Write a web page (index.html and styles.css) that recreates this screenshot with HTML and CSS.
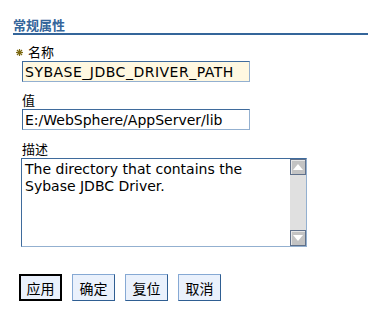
FILE: index.html
```html
<!DOCTYPE html>
<html lang="zh">
<head>
<meta charset="utf-8">
<title>常规属性</title>
<link rel="stylesheet" href="styles.css">
</head>
<body>
<div class="panel">
  <h2 class="section-title">常规属性</h2>
  <div class="fields">
    <div class="field field-first">
      <label class="label"><span class="req"><svg width="7" height="7" viewBox="0 0 7 7"><g stroke="#7d6a14" stroke-width="1.2"><line x1="3.5" y1="0" x2="3.5" y2="7"/><line x1="0" y1="3.5" x2="7" y2="3.5"/><line x1="1" y1="1" x2="6" y2="6"/><line x1="6" y1="1" x2="1" y2="6"/></g></svg></span>名称</label>
      <input class="input input-req" type="text" value="SYBASE_JDBC_DRIVER_PATH">
    </div>
    <div class="field">
      <label class="label">值</label>
      <input class="input" type="text" value="E:/WebSphere/AppServer/lib">
    </div>
    <div class="field field-desc">
      <label class="label">描述</label>
      <div class="textbox">
        <textarea class="textarea">The directory that contains the Sybase JDBC Driver.</textarea>
        <div class="scrollbar">
          <div class="sb-btn"><svg width="10" height="6" viewBox="0 0 10 6"><polygon points="5,0 10,6 0,6" fill="#fff"/></svg></div>
          <div class="sb-track"></div>
          <div class="sb-btn"><svg width="10" height="6" viewBox="0 0 10 6"><polygon points="0,0 10,0 5,6" fill="#fff"/></svg></div>
        </div>
      </div>
    </div>
  </div>
  <div class="buttons">
    <button class="btn btn-default">应用</button>
    <button class="btn">确定</button>
    <button class="btn">复位</button>
    <button class="btn">取消</button>
  </div>
</div>
</body>
</html>
```

FILE: styles.css
```css
html, body {
  margin: 0;
  padding: 0;
  background: #ffffff;
}
body {
  font-family: "Noto Sans CJK SC", "DejaVu Sans", sans-serif;
  color: #000;
}
.panel {
  padding-top: 17px;
  padding-left: 13px;
}
.section-title {
  margin: 0;
  font-size: 13px;
  line-height: 16px;
  font-weight: bold;
  color: #34659a;
  border-bottom: 2px solid #34659a;
}
.fields {
  padding-left: 8px;
}
.field {
  display: flex;
  flex-direction: column;
  align-items: flex-start;
  margin-top: 10px;
}
.field-first {
  margin-top: 9px;
}
.field-desc {
  margin-top: 11px;
}
.label {
  display: flex;
  align-items: center;
  font-size: 13px;
  line-height: 16px;
  height: 16px;
  margin-bottom: 1px;
  padding-left: 1px;
}
.req {
  display: inline-flex;
  width: 7px;
  height: 7px;
  margin-left: -6px;
  margin-right: 5px;
}
.input {
  box-sizing: border-box;
  width: 228px;
  height: 21px;
  margin: 0 0 0 1px;
  padding: 0 2px;
  font-family: "DejaVu Sans", sans-serif;
  font-size: 14px;
  color: #000;
  background: #fff;
  border: 1px solid;
  border-color: #3f6b9c #93b0d0 #93b0d0 #3f6b9c;
  outline: none;
}
.input-req {
  background: #fff8e1;
  letter-spacing: 0.5px;
}
.textbox {
  box-sizing: border-box;
  display: flex;
  width: 286px;
  height: 89px;
  border: 1px solid;
  border-color: #3f6b9c #93b0d0 #93b0d0 #3f6b9c;
  background: #fff;
}
.textarea {
  flex: 1;
  min-width: 0;
  margin: 0;
  border: 0;
  padding: 2px 3px;
  resize: none;
  overflow: hidden;
  font-family: "DejaVu Sans", sans-serif;
  font-size: 14px;
  line-height: 17px;
  color: #000;
  outline: none;
  background: transparent;
}
.scrollbar {
  display: flex;
  flex-direction: column;
  width: 16px;
  background: #e0e0e0;
}
.sb-btn {
  box-sizing: border-box;
  height: 16px;
  display: flex;
  align-items: center;
  justify-content: center;
  background: #c3c3c3;
  border: 1px solid #5f708a;
  box-shadow: inset 1px 1px 0 #e6e6e6;
}
.sb-track {
  flex: 1;
}
.buttons {
  display: flex;
  gap: 10px;
  margin-top: 27px;
  padding-left: 6px;
}
.btn {
  box-sizing: border-box;
  width: 43px;
  height: 27px;
  padding: 0;
  margin: 0;
  font-family: "Noto Sans CJK SC", sans-serif;
  font-size: 14px;
  color: #000;
  background: #eaf1fc;
  border: 1px solid;
  border-color: #86a9d4 #2f5e92 #2f5e92 #86a9d4;
  border-radius: 0;
}
.btn-default {
  border: 1px solid #000;
  box-shadow: inset 0 0 0 1px #000;
}
```
